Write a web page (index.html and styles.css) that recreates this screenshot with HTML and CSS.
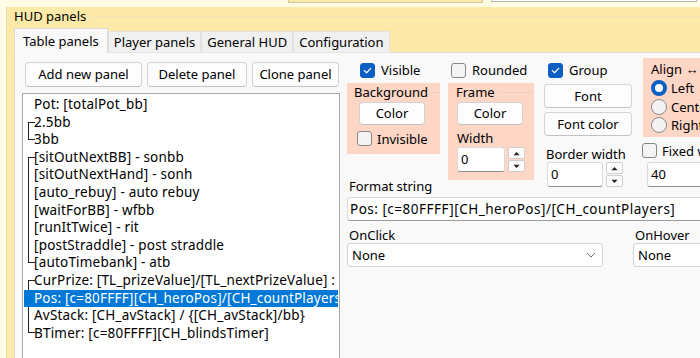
FILE: index.html
```html
<!DOCTYPE html>
<html>
<head>
<meta charset="utf-8">
<link rel="stylesheet" href="styles.css">
</head>
<body>
<div class="top-strip"><div class="ts ts1"></div><div class="ts ts2"></div></div>
<section class="group">
  <div class="group-title"><span>HUD panels</span></div>
  <div class="tabs">
    <div class="tab active">Table panels</div>
    <div class="tab">Player panels</div>
    <div class="tab">General HUD</div>
    <div class="tab">Configuration</div>
  </div>
  <div class="pane">
    <div class="left-col">
      <div class="btn-row">
        <div class="btn w-add">Add new panel</div>
        <div class="btn w-del">Delete panel</div>
        <div class="btn w-clone">Clone panel</div>
      </div>
      <div class="listbox">
        <div class="item">Pot: [totalPot_bb]</div>
        <div class="grp">
          <div class="item">2.5bb</div>
          <div class="item">3bb</div>
        </div>
        <div class="grp">
          <div class="item">[sitOutNextBB] - sonbb</div>
          <div class="item">[sitOutNextHand] - sonh</div>
          <div class="item">[auto_rebuy] - auto rebuy</div>
          <div class="item">[waitForBB] - wfbb</div>
          <div class="item">[runItTwice] - rit</div>
          <div class="item">[postStraddle] - post straddle</div>
          <div class="item">[autoTimebank] - atb</div>
        </div>
        <div class="grp">
          <div class="item">CurPrize: [TL_prizeValue]/[TL_nextPrizeValue] :</div>
          <div class="item sel">Pos: [c=80FFFF][CH_heroPos]/[CH_countPlayers]</div>
          <div class="item">AvStack: [CH_avStack] / {[CH_avStack]/bb}</div>
          <div class="item">BTimer: [c=80FFFF][CH_blindsTimer]</div>
        </div>
      </div>
    </div>

    <div class="props">
      <div class="top">
        <div class="lg">
          <div class="cols">
            <div class="col1">
              <div class="chk-row pl13"><span class="cb on"><svg viewBox="0 0 15 15"><path d="M3.8 7.6l2.6 2.5 4.8-5" /></svg></span><span>Visible</span></div>
              <div class="box bg-box">
                <div class="box-title"><span>Background</span></div>
                <div class="btn color-btn">Color</div>
                <div class="chk-row inv"><span class="cb"></span><span>Invisible</span></div>
              </div>
            </div>
            <div class="col2">
              <div class="chk-row pl3"><span class="cb"></span><span>Rounded</span></div>
              <div class="box frame-box">
                <div class="box-title"><span>Frame</span></div>
                <div class="btn color-btn fr">Color</div>
                <div class="lbl width-lbl">Width</div>
                <div class="spin fr-spin">
                  <div class="inp">0</div>
                  <div class="spin-btns">
                    <div class="sb"><svg viewBox="0 0 8 5"><path d="M0.5 4.5L4 0.8 7.5 4.5z"/></svg></div>
                    <div class="sb"><svg viewBox="0 0 8 5"><path d="M0.5 0.5L4 4.2 7.5 0.5z"/></svg></div>
                  </div>
                </div>
              </div>
            </div>
          </div>
          <div class="lbl fmt-lbl">Format string</div>
        </div>

        <div class="col3">
          <div class="chk-row pl4"><span class="cb on"><svg viewBox="0 0 15 15"><path d="M3.8 7.6l2.6 2.5 4.8-5" /></svg></span><span>Group</span></div>
          <div class="btn font-btn">Font</div>
          <div class="btn font-btn fc">Font color</div>
          <div class="lbl bw-lbl">Border width</div>
          <div class="spin bw-spin">
            <div class="inp">0</div>
            <div class="spin-btns">
              <div class="sb"><svg viewBox="0 0 8 5"><path d="M0.5 4.5L4 0.8 7.5 4.5z"/></svg></div>
              <div class="sb"><svg viewBox="0 0 8 5"><path d="M0.5 0.5L4 4.2 7.5 0.5z"/></svg></div>
            </div>
          </div>
        </div>

        <div class="col4">
          <div class="box align-box">
            <div class="box-title"><span>Align ↔</span></div>
            <div class="radio-row"><span class="rb on"></span><span>Left</span></div>
            <div class="radio-row"><span class="rb"></span><span>Center</span></div>
            <div class="radio-row"><span class="rb"></span><span>Right</span></div>
          </div>
          <div class="chk-row fixed"><span class="cb"></span><span>Fixed width</span></div>
          <div class="inp fixed-inp">40</div>
        </div>
      </div>

      <div class="inp fmt-inp">Pos: [c=80FFFF][CH_heroPos]/[CH_countPlayers]</div>

      <div class="events">
        <div class="ev ev-click">
          <div class="lbl ev-lbl">OnClick</div>
          <div class="select"><span>None</span><svg viewBox="0 0 10 6"><path d="M1 1l4 4 4-4"/></svg></div>
        </div>
        <div class="ev ev-hover">
          <div class="lbl ev-lbl">OnHover</div>
          <div class="select"><span>None</span></div>
        </div>
      </div>
    </div>
  </div>
</section>
</body>
</html>
```
FILE: styles.css
```css
* { box-sizing: border-box; }
html, body { margin: 0; padding: 0; }
body {
  width: 700px;
  height: 358px;
  overflow: hidden;
  background: #fffbe4;
  font-family: "Noto Sans", "Segoe UI", sans-serif;
  font-size: 13px;
  color: #000;
}

.top-strip { height: 7px; display: flex; gap: 8px; padding-left: 288px; }
.ts1 { width: 195px; height: 3px; background: #fdeaa8; border: 1px solid #cfc3a0; border-top: none; }
.ts2 { width: 206px; height: 2px; background: #fff; border: 1px solid #b4b4b4; border-top: none; }

.group {
  margin-left: 6px;
  height: 351px;
  background: #fdeaa9;
  border-left: 1px solid #e8dab0;
  display: flex;
  flex-direction: column;
  overflow: hidden;
}
.group-title {
  display: flex;
  align-items: center;
  height: 19px;
  line-height: 19px;
  padding-left: 7px;
}
.group-title::after {
  content: "";
  flex: 1;
  border-top: 1px solid #f3e4b8;
  margin-left: 4px;
}

.tabs {
  display: flex;
  align-items: flex-end;
  height: 27px;
  padding-left: 7px;
  margin-bottom: -1px;
  position: relative;
  z-index: 1;
}
.tab {
  height: 22px;
  line-height: 20px;
  padding: 0 5px;
  background: #f0f0f0;
  border: 1px solid #e2e2e2;
  white-space: nowrap;
}
.tab.active {
  height: 25px;
  line-height: 24px;
  padding: 0 8px 0 8px;
  background: #f9f9f9;
  border-color: #d9d9d9;
  border-bottom: none;
}

.pane {
  flex: 1;
  margin-left: 7px;
  background: #f9f9f9;
  border-top: 1px solid #dedede;
  border-left: 1px solid #d8d8d8;
  display: flex;
  overflow: hidden;
}

.left-col { padding-left: 7px; flex: none; }
.btn-row { display: flex; gap: 5px; margin-top: 9px; padding-left: 3px; }
.btn {
  height: 25px;
  line-height: 23px;
  text-align: center;
  background: #fdfdfd;
  border: 1px solid #d3d3d3;
  border-bottom-color: #c2c2c2;
  border-radius: 4px;
  white-space: nowrap;
}
.w-add { width: 117px; }
.w-del { width: 100px; }
.w-clone { width: 87px; }

.listbox {
  margin-top: 6px;
  width: 318px;
  height: 300px;
  background: #fff;
  border: 1px solid #a9a9a9;
  padding: 2px 1px;
  overflow: hidden;
}
.item {
  height: 17.6px;
  line-height: 17.6px;
  padding-left: 10px;
  white-space: nowrap;
  overflow: hidden;
  font-size: 13.5px;
  letter-spacing: 0.2px;
}
.item.sel { position: relative; background: #0078d7; color: #fff; }
.grp { position: relative; }
.grp::before {
  content: "";
  position: absolute;
  left: 4px;
  top: 8px;
  bottom: 9px;
  width: 6px;
  border: 1px solid #222;
  border-right: none;
}

.props {
  flex: 1;
  margin-left: 7px;
  margin-top: 5px;
  display: flex;
  flex-direction: column;
  min-width: 0;
}
.top { display: flex; align-items: flex-start; }
.lg { margin-top: 3px; flex: none; }
.cols { display: flex; gap: 8px; }
.col1 { width: 93px; }
.col2 { width: 86px; }

.chk-row { display: flex; align-items: center; gap: 6px; height: 18px; white-space: nowrap; }
.pl13 { padding-left: 13px; }
.pl3 { padding-left: 3px; }
.pl4 { padding-left: 4px; }
.cb {
  width: 15px;
  height: 15px;
  flex: none;
  border: 1px solid #878787;
  border-radius: 3px;
  background: #f4f4f4;
  display: flex;
}
.cb.on { background: #0b5ec2; border-color: #0b5ec2; }
.cb svg { width: 13px; height: 13px; }
.cb svg path { fill: none; stroke: #fff; stroke-width: 1.4; stroke-linecap: round; stroke-linejoin: round; }

.box { background: #fdd6c6; }
.box-title { display: flex; align-items: center; height: 19px; line-height: 19px; margin-top: 1px; white-space: nowrap; }
.box-title::after { content: ""; flex: 1; border-top: 1px solid #f0cdbf; margin-left: 4px; }
.bg-box { margin-top: 4px; height: 71px; padding-left: 7px; }
.frame-box { margin-top: 4px; height: 97px; padding-left: 8px; }
.color-btn { width: 66px; height: 23px; line-height: 21px; margin-left: 5px; }
.color-btn.fr { margin-left: 1px; }
.inv { margin-top: 4px; height: 19px; padding-left: 3px; gap: 5px; }
.lbl { white-space: nowrap; }
.width-lbl { margin-top: 5px; line-height: 17px; height: 17px; padding-left: 1px; }

.spin { display: flex; align-items: flex-start; gap: 3px; }
.inp {
  background: #fff;
  border: 1px solid #dadada;
  border-bottom-color: #8c8c8c;
  border-radius: 3px;
  height: 25px;
  line-height: 23px;
  padding-left: 3px;
  white-space: nowrap;
  overflow: hidden;
}
.fr-spin { margin-left: 1px; }
.fr-spin .inp { width: 48px; }
.spin-btns { display: flex; flex-direction: column; gap: 1px; }
.sb {
  width: 17px;
  height: 12px;
  background: #fdfdfd;
  border: 1px solid #d0d0d0;
  border-radius: 2px;
  display: flex;
  align-items: center;
  justify-content: center;
}
.sb svg { width: 7px; height: 5px; }
.sb svg path { fill: #222; }

.fmt-lbl { margin-top: -1px; line-height: 14px; height: 14px; padding-left: 2px; }

.col3 { width: 88px; margin-left: 10px; margin-top: 3px; flex: none; }
.font-btn { width: 88px; height: 24px; line-height: 22px; margin-top: 5px; }
.font-btn.fc { margin-top: 4px; }
.bw-lbl { margin-top: 10px; line-height: 16px; height: 16px; padding-left: 2px; }
.bw-spin { margin-left: 3px; }
.bw-spin .inp { width: 56px; }

.col4 { margin-left: 11px; width: 90px; flex: none; }
.align-box { height: 79px; padding-left: 8px; padding-top: 1px; }
.radio-row { display: flex; align-items: center; gap: 4px; height: 18.5px; white-space: nowrap; }
.rb {
  width: 16px;
  height: 16px;
  flex: none;
  border-radius: 50%;
  border: 1px solid #8a8a8a;
  background: #f3f3f3;
}
.rb.on {
  background: #fff;
  border: 4.5px solid #0b5ec2;
}
.fixed { margin-top: 4px; height: 19px; margin-left: -1px; gap: 5px; }
.fixed-inp { width: 100px; margin-top: 2px; margin-left: 4px; }

.fmt-inp {
  margin-top: 4px;
  width: 380px;
  height: 24px;
  line-height: 22px;
  padding-left: 2px;
  border-bottom-color: #9a9a9a;
  font-size: 13.5px;
  letter-spacing: 0.5px;
}

.events { display: flex; gap: 30px; margin-top: 7px; }
.ev-lbl { line-height: 14px; height: 14px; padding-left: 2px; }
.select {
  margin-top: 1px;
  height: 24px;
  background: #fff;
  border: 1px solid #d3d3d3;
  border-radius: 3px;
  display: flex;
  align-items: center;
  justify-content: space-between;
  padding: 0 6px 0 4px;
}
.ev-click { width: 256px; flex: none; }
.ev-hover { width: 100px; flex: none; }
.select svg { width: 10px; height: 6px; }
.select svg path { fill: none; stroke: #707070; stroke-width: 1; }
```
